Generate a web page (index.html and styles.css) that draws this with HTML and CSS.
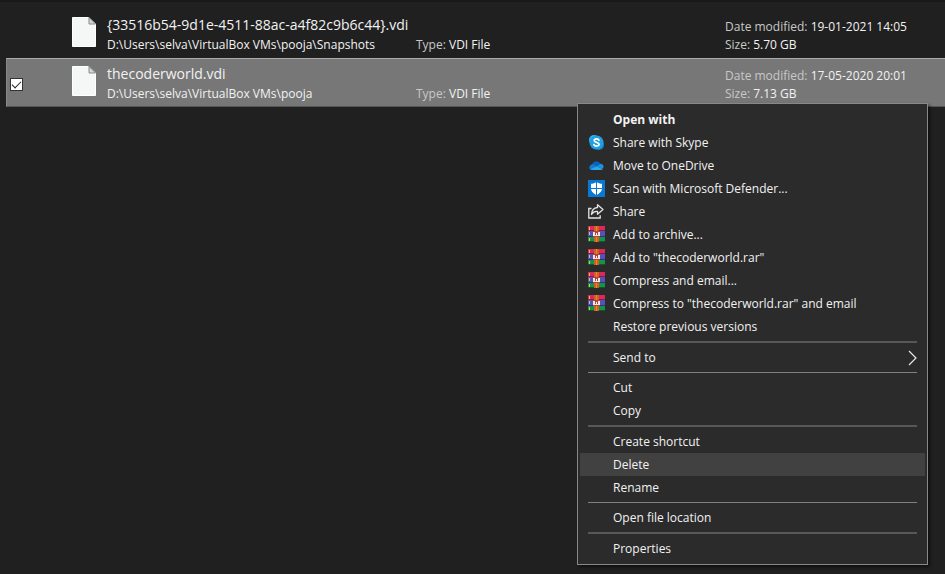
FILE: index.html
```html
<!DOCTYPE html>
<html lang="en">
<head>
<meta charset="utf-8">
<title>Search results</title>
<link rel="stylesheet" href="styles.css">
</head>
<body>
<svg class="defs" aria-hidden="true">
  <defs>
    <symbol id="file" viewBox="0 0 24 30">
      <path d="M.5.5h16l7 6.500v22.500H.5z" fill="#f5f7f7" stroke="#fff"/>
      <path d="M17 .5v6.500h6.500z" fill="#d4d7d7" stroke="#888"/>
    </symbol>
    <symbol id="rar" viewBox="0 0 17 16">
      <path d="M0 0h17v5H0z" fill="#d92a58"/><path d="M0 4h17v1H0z" fill="#8e1c3e"/>
      <path d="M0 5h17v6H0z" fill="#5550ba"/><path d="M0 10h17v1H0z" fill="#343080"/>
      <path d="M0 11h17v5H0z" fill="#159447"/><path d="M0 15h17v1H0z" fill="#0b5a2a"/>
      <path d="M1 1h1v3H1zM1 6h1v3H1zM1 12h1v3H1z" fill="#e6bd48"/>
      <path d="M6 0h5v16H6z" fill="#d0601f"/>
      <path d="M8 0h1v16H8z" fill="#e98533"/>
      <path d="M5 5h7v6H5z" fill="#a8483a"/>
      <path d="M5 6h2v3h3V6h2v4H5z" fill="#f3e4dc"/>
      <path d="M8 7h1v2H8z" fill="#fff"/>
    </symbol>
  </defs>
</svg>
<main class="results">
  <article class="row">
    <input class="check" type="checkbox" aria-label="Select snapshot">
    <svg class="file"><use href="#file"/></svg>
    <div class="name">{33516b54-9d1e-4511-88ac-a4f82c9b6c44}.vdi</div>
    <div class="path">D:\Users\selva\VirtualBox VMs\pooja\Snapshots</div>
    <div class="type"><span class="label">Type:</span> VDI File</div>
    <div class="date"><span class="label">Date modified:</span> 19-01-2021 14:05</div>
    <div class="size"><span class="label">Size:</span> 5.70 GB</div>
  </article>
  <article class="row selected">
    <input class="check" type="checkbox" aria-label="Select thecoderworld.vdi" checked>
    <svg class="file"><use href="#file"/></svg>
    <div class="name">thecoderworld.vdi</div>
    <div class="path">D:\Users\selva\VirtualBox VMs\pooja</div>
    <div class="type"><span class="label">Type:</span> VDI File</div>
    <div class="date"><span class="label">Date modified:</span> 17-05-2020 20:01</div>
    <div class="size"><span class="label">Size:</span> 7.13 GB</div>
  </article>
</main>
<div class="menu" role="menu">
  <button class="item default" role="menuitem"><span class="icon"></span>Open with</button>
  <button class="item" role="menuitem"><span class="icon"><svg width="17" height="17" viewBox="0 0 17 17"><circle cx="6" cy="6" r="5" fill="#35b5ef"/><circle cx="11" cy="11" r="5" fill="#1580cf"/><circle cx="8.500" cy="8.500" r="7" fill="#219fe2"/><path d="M11 6.300C10.500 4.600 6.200 4.300 6.200 6.600c0 2.200 4.900 1.300 4.900 3.700 0 2.200-4.500 2.300-5.200.3" fill="none" stroke="#fff" stroke-width="1.700" stroke-linecap="round"/></svg></span>Share with Skype</button>
  <button class="item" role="menuitem"><span class="icon"><svg width="17" height="17" viewBox="0 0 17 17"><path d="M4 7.500C5 4 10.500 2.700 12.500 7L9 10z" fill="#0c62b8"/><path d="M2 12.300C.3 10.500 2 7 5 7.200l5.500 3.300-6.500 2z" fill="#137bd4"/><path d="M9 9.300l3.500-2.500c2.500 0 4.200 3 2 5.200z" fill="#1b92e3"/><path d="M2.300 12.600L9 9.200l5.700 3c-.6.600-1.200.8-2 .8H4c-.8 0-1.300-.1-1.700-.4z" fill="#29a8ed"/></svg></span>Move to OneDrive</button>
  <button class="item" role="menuitem"><span class="icon"><svg width="17" height="17" viewBox="0 0 17 17"><path d="M0 0h17v17H0z" fill="#0878d7"/><path d="M8.500 2c1.700 1.200 3.500 1.700 5.500 1.800v4.400c0 3.200-2.600 5.300-5.500 6.800C5.600 13.500 3 11.400 3 8.200V3.800C5 3.700 6.800 3.200 8.500 2z" fill="#fff"/><path d="M8.500 2v13M3 8.500h11" stroke="#0878d7"/></svg></span>Scan with Microsoft Defender...</button>
  <button class="item" role="menuitem"><span class="icon"><svg width="17" height="17" viewBox="0 0 17 17" fill="none" stroke="#e4e4e4" stroke-width="1.300"><path d="M3.500 5.500H.8v9.500h11.400v-2.700"/><path d="M9.500 1.700l5.500 4.800-5.500 4.700V8.500C7 8 5.200 9 3.500 11.500 3.700 7.300 6 4.800 9.500 4.500z" stroke-linejoin="round"/></svg></span>Share</button>
  <button class="item" role="menuitem"><span class="icon"><svg width="17" height="18"><use href="#rar" width="17" height="16"/></svg></span>Add to archive...</button>
  <button class="item" role="menuitem"><span class="icon"><svg width="17" height="18"><use href="#rar" width="17" height="16"/></svg></span>Add to "thecoderworld.rar"</button>
  <button class="item" role="menuitem"><span class="icon"><svg width="17" height="18"><use href="#rar" width="17" height="16"/></svg></span>Compress and email...</button>
  <button class="item" role="menuitem"><span class="icon"><svg width="17" height="18"><use href="#rar" width="17" height="16"/></svg></span>Compress to "thecoderworld.rar" and email</button>
  <button class="item" role="menuitem"><span class="icon"></span>Restore previous versions</button>
  <hr class="thick">
  <button class="item" role="menuitem"><span class="icon"></span>Send to<svg class="arrow" width="9" height="16" viewBox="0 0 9 16"><path d="M1 1l7 7-7 7" fill="none" stroke="#e8e8e8" stroke-width="1.200"/></svg></button>
  <hr>
  <button class="item" role="menuitem"><span class="icon"></span>Cut</button>
  <button class="item" role="menuitem"><span class="icon"></span>Copy</button>
  <hr class="thick">
  <button class="item" role="menuitem"><span class="icon"></span>Create shortcut</button>
  <button class="item active" role="menuitem"><span class="icon"></span>Delete</button>
  <button class="item" role="menuitem"><span class="icon"></span>Rename</button>
  <hr>
  <button class="item" role="menuitem"><span class="icon"></span>Open file location</button>
  <hr class="thick">
  <button class="item" role="menuitem"><span class="icon"></span>Properties</button>
</div>
</body>
</html>
```
FILE: styles.css
```css
* { box-sizing: border-box; }
body {
  margin: 0;
  min-height: 100vh;
  background: #202020;
  border-top: 2px solid #191919;
  color: #f2f2f2;
  font: 12px/18px "Open Sans", "Noto Sans", sans-serif;
}
.defs { position: absolute; width: 0; height: 0; }
.results { padding: 7px 0 0 6px; }
.row {
  display: grid;
  grid-template-columns: 65px 35px 309px 1fr 220px;
  grid-template-rows: 20px 20px;
  grid-template-areas:
    "check file name name date"
    "check file path type size";
  padding: 5px 0 2px;
  border: 1px solid transparent;
  border-right: 0;
  white-space: nowrap;
  line-height: 20px;
}
.row.selected {
  background: #777;
  border-color: #aaa #777 #555 #888;
}
.check {
  grid-area: check;
  align-self: center;
  appearance: none;
  width: 13px;
  height: 13px;
  margin: 0 0 0 3px;
}
.row:not(.selected) .check { opacity: 0; }
.check:checked {
  border: 1px solid #333;
  background: #fff;
}
.check:checked::after {
  content: "";
  display: block;
  width: 8px;
  height: 4px;
  margin: 2px 1px;
  border: solid #222;
  border-width: 0 0 1px 1px;
  transform: rotate(-45deg);
}
.file { grid-area: file; width: 24px; height: 30px; margin-top: 2px; }
.name { grid-area: name; font-size: 14px; }
.path { grid-area: path; }
.type { grid-area: type; }
.date { grid-area: date; padding-top: 2px; }
.size { grid-area: size; }
.label { color: #c8c8c8; }
.menu {
  position: absolute;
  top: 103px;
  right: 17px;
  width: 351px;
  padding: 4px 2px;
  background: #2b2b2b;
  border: 1px solid #888;
  box-shadow: 2px 2px 3px #0008;
}
.item {
  display: flex;
  align-items: center;
  width: 100%;
  height: 23px;
  padding: 0 8px;
  border: 0;
  background: none;
  color: #f2f2f2;
  font: inherit;
  text-align: left;
  white-space: nowrap;
}
.item.default { font-weight: 700; }
.item.active, .item:hover { background: #414141; }
.icon { display: flex; width: 25px; flex: none; }
.arrow { margin-left: auto; }
hr {
  height: 1px;
  margin: 3px 8px;
  border: 0;
  background: #808080;
}
hr.thick { height: 2px; background: #585858; }
```
